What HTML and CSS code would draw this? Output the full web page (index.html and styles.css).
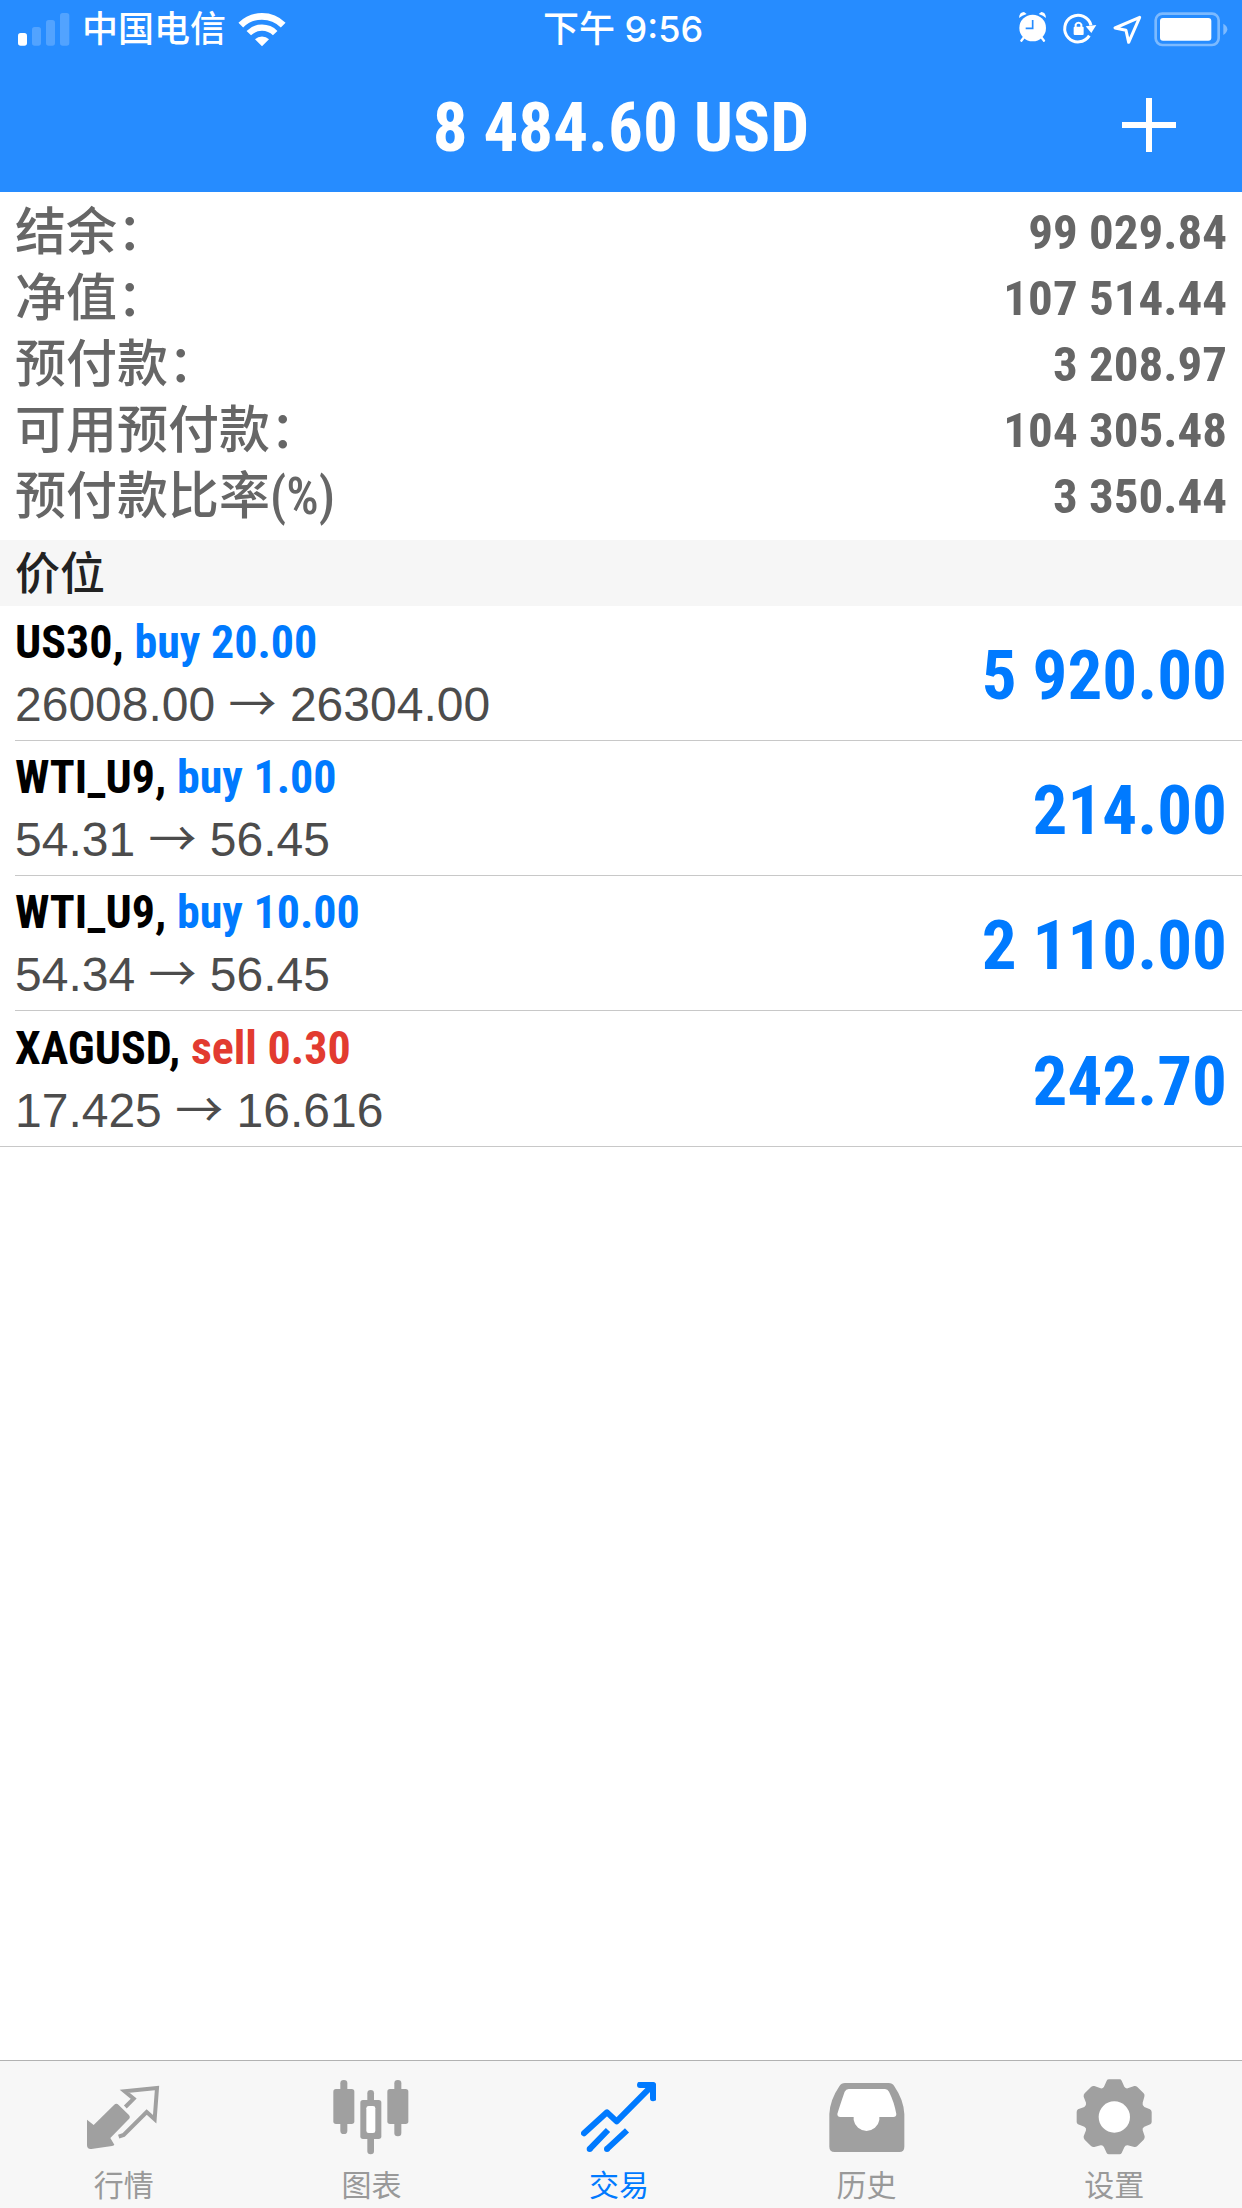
FILE: index.html
```html
<!DOCTYPE html>
<html lang="zh-CN">
<head>
<meta charset="utf-8">
<meta name="viewport" content="width=device-width, initial-scale=1">
<title>交易</title>
<link rel="stylesheet" href="styles.css">
</head>
<body>
<div class="app">
  <div class="top">
    <div class="status">
      <div class="status-left">
        <svg class="signal" viewBox="54 38 156 99" aria-hidden="true">
          <rect x="54" y="98" width="27" height="38" rx="8" fill="#fff"/>
          <g fill="#fff" opacity=".2">
            <rect x="96" y="80" width="27" height="56" rx="8"/>
            <rect x="138" y="59" width="27" height="77" rx="8"/>
            <rect x="180" y="38" width="28" height="98" rx="8"/>
          </g>
        </svg>
        <span class="carrier">中国电信</span>
        <svg class="wifi" viewBox="720 36 144 105" aria-hidden="true">
          <g fill="none" stroke="#fff">
            <path stroke-width="20" d="M728.4 75.4A90 90 0 0 1 855.6 75.4"/>
            <path stroke-width="19" d="M752.4 99.4A56 56 0 0 1 831.6 99.4"/>
          </g>
          <path fill="#fff" d="M792 139L771 118A30 30 0 0 1 813 118Z"/>
        </svg>
      </div>
      <span class="clock">下午 9:56</span>
      <div class="status-right">
        <svg class="status-icon" viewBox="90 27 120 120" aria-hidden="true">
          <circle cx="158" cy="84" r="40" fill="#fff"/>
          <path fill="#fff" d="M117 54Q118 36 132 36L140 42Q126 46 117 54ZM198 54Q197 36 184 36L176 42Q190 46 198 54Z"/>
          <path stroke="#fff" stroke-width="7" stroke-linecap="round" d="M132 112L124 122M184 112L192 122"/>
          <path fill="none" stroke="#268cff" stroke-width="5" d="M158 60V85H137"/>
        </svg>
        <svg class="status-icon" viewBox="234 27 120 120" aria-hidden="true">
          <path fill="none" stroke="#fff" stroke-width="9" d="M328 107A40 40 0 1 1 333 76"/>
          <path fill="#fff" d="M317 79L349 75 334 99Z"/>
          <rect x="281" y="80" width="30" height="25" rx="3" fill="#fff"/>
          <path fill="none" stroke="#fff" stroke-width="6" d="M287 84V74A9 9 0 0 1 304 74V84"/>
        </svg>
        <svg class="status-icon" viewBox="378 27 120 120" aria-hidden="true">
          <path fill="none" stroke="#fff" stroke-width="9" stroke-linejoin="round" d="M479 52L405 84 438 91 446 127Z"/>
        </svg>
        <svg class="battery" viewBox="521 35 222 105" aria-hidden="true">
          <rect x="526" y="40" width="189" height="94" rx="20" fill="none" stroke="#fff" stroke-width="8" opacity=".4"/>
          <rect x="539" y="53" width="154" height="68" rx="9" fill="#fff"/>
          <path fill="#fff" opacity=".4" d="M729 70Q741 77 741 87T729 104Z"/>
        </svg>
      </div>
    </div>
    <header class="header">
      <h1 class="title">8 484.60 USD</h1>
      <button class="add" type="button" aria-label="新建">
        <svg viewBox="0 0 54 54" aria-hidden="true"><path stroke="#fff" stroke-width="6" d="M27 0V54M0 27H54"/></svg>
      </button>
    </header>
  </div>

  <main class="content">
    <dl class="summary">
      <div class="summary-row"><dt>结余：</dt><dd>99 029.84</dd></div>
      <div class="summary-row"><dt>净值：</dt><dd>107 514.44</dd></div>
      <div class="summary-row"><dt>预付款：</dt><dd>3 208.97</dd></div>
      <div class="summary-row"><dt>可用预付款：</dt><dd>104 305.48</dd></div>
      <div class="summary-row"><dt>预付款比率(%)</dt><dd>3 350.44</dd></div>
    </dl>

    <h2 class="section">价位</h2>
    <ul class="positions">
      <li class="position">
        <div>
          <div class="symbol">US30, <span class="buy">buy 20.00</span></div>
          <div class="prices">26008.00 <span class="arrow">→</span> 26304.00</div>
        </div>
        <strong class="profit">5 920.00</strong>
      </li>
      <li class="position">
        <div>
          <div class="symbol">WTI_U9, <span class="buy">buy 1.00</span></div>
          <div class="prices">54.31 <span class="arrow">→</span> 56.45</div>
        </div>
        <strong class="profit">214.00</strong>
      </li>
      <li class="position">
        <div>
          <div class="symbol">WTI_U9, <span class="buy">buy 10.00</span></div>
          <div class="prices">54.34 <span class="arrow">→</span> 56.45</div>
        </div>
        <strong class="profit">2 110.00</strong>
      </li>
      <li class="position">
        <div>
          <div class="symbol">XAGUSD, <span class="sell">sell 0.30</span></div>
          <div class="prices">17.425 <span class="arrow">→</span> 16.616</div>
        </div>
        <strong class="profit">242.70</strong>
      </li>
    </ul>
  </main>

  <nav class="tabs">
    <a class="tab" href="#quotes">
      <svg viewBox="138 87 228 228" aria-hidden="true">
        <path fill="currentColor" d="M141 209L161 225 222 165Q229 158 236 165L266 194Q273 201 266 208L211 264 223 284Q222 287 216 288L154 297Q141 298 141 286Z"/>
        <path fill="none" stroke="currentColor" stroke-width="12" d="M256 171L281 146 254 124 351 114 344 208 320 186 251 255 236 260"/>
      </svg>
      <span>行情</span>
    </a>
    <a class="tab" href="#charts">
      <svg viewBox="884 87 228 228" aria-hidden="true">
        <g fill="currentColor">
          <rect x="906" y="90" width="21" height="162" rx="10"/>
          <rect x="885" y="117" width="63" height="105" rx="8"/>
          <rect x="987" y="120" width="20" height="193" rx="10"/>
          <rect x="966" y="150" width="63" height="117" rx="8"/>
          <rect x="1068" y="90" width="21" height="169" rx="10"/>
          <rect x="1047" y="117" width="63" height="105" rx="8"/>
        </g>
        <rect x="984" y="168" width="27" height="81" rx="7" fill="#fff"/>
      </svg>
      <span>图表</span>
    </a>
    <a class="tab active" href="#trade" aria-current="page">
      <svg viewBox="126 87 228 228" aria-hidden="true">
        <g fill="none" stroke="currentColor" stroke-width="18" stroke-linejoin="round">
          <path stroke-linecap="round" d="M135 250L204 187 233 214 340 106M303 105H342V145"/>
          <path stroke-linecap="butt" d="M153 296L207 240M205 296L264 241"/>
        </g>
        <circle cx="152" cy="297" r="9" fill="currentColor"/>
        <circle cx="204" cy="297" r="9" fill="currentColor"/>
        <path fill="currentColor" d="M296 97H340Q351 97 351 108V152L333 138V114H306Z"/>
      </svg>
      <span>交易</span>
    </a>
    <a class="tab" href="#history">
      <svg viewBox="869 87 228 228" aria-hidden="true">
        <path fill="currentColor" d="M917 99H1048Q1059 99 1065 109Q1093 150 1095 192V290Q1095 306 1080 306H886Q870 306 870 290V192Q872 150 900 109Q906 99 917 99Z"/>
        <path fill="#fff" d="M928 117H1037Q1045 117 1049 125Q1065 157 1071 192Q1071 201 1062 201H1020V210A39 39 0 0 1 943 210V201H903Q894 201 894 192Q900 171 916 125Q920 117 928 117Z"/>
      </svg>
      <span>历史</span>
    </a>
    <a class="tab" href="#settings">
      <svg viewBox="115 89 228 228" aria-hidden="true">
        <path fill="currentColor" d="M214 90H246Q250 90 252 94L260 112Q264 118 270 117L290 110Q295 109 299 113L318 132Q322 136 320 142L315 160Q313 168 320 173L337 180Q342 183 342 188V218Q342 222 338 225L320 232Q313 236 315 243L321 261Q322 267 318 271L299 290Q295 294 290 293L270 288Q263 287 260 294L252 311Q250 315 246 315H214Q209 315 207 311L199 294Q196 287 189 288L170 293Q164 294 160 290L141 271Q137 267 138 261L145 243Q147 236 140 232L121 225Q117 222 117 218V188Q117 183 121 180L140 173Q147 168 145 160L138 142Q137 136 141 132L160 113Q164 109 170 110L189 117Q196 118 199 112L207 94Q209 90 214 90Z"/>
        <circle cx="230" cy="203" r="47" fill="#fff"/>
      </svg>
      <span>设置</span>
    </a>
  </nav>
</div>
</body>
</html>
```

FILE: styles.css
```css
* {
  box-sizing: border-box;
  margin: 0;
  padding: 0;
}

body {
  background: #fff;
  color: #000;
  font-family: "Roboto Condensed", "Noto Sans CJK SC", sans-serif;
}

svg {
  display: block;
}

.app {
  display: flex;
  flex-direction: column;
  min-height: 100vh;
}

.top {
  background: #268cff;
  color: #fff;
}

.status {
  display: grid;
  grid-template-columns: 1fr auto 1fr;
  align-items: center;
  height: 58px;
  padding: 0 14px 0 18px;
  font: 500 36px/40px Inter, "Noto Sans CJK SC", sans-serif;
}

.status-left,
.status-right {
  display: flex;
  align-items: center;
}

.status-left {
  gap: 12px;
}

.status-right {
  justify-content: flex-end;
  gap: 8px;
}

.signal {
  width: 52px;
  height: 33px;
}

.wifi {
  width: 48px;
  height: 35px;
}

.status-icon {
  width: 40px;
  height: 40px;
}

.battery {
  width: 74px;
  height: 35px;
}

.header {
  display: grid;
  grid-template-columns: 1fr auto 1fr;
  align-items: center;
  height: 134px;
  padding: 0 66px;
}

.title {
  grid-column: 2;
  padding-top: 6px;
  font-size: 69px;
  line-height: 80px;
  font-weight: 700;
}

.add {
  justify-self: end;
  width: 54px;
  height: 54px;
  border: 0;
  background: none;
  cursor: pointer;
}

.content {
  flex: 1;
}

.summary {
  padding: 8px 15px 10px;
  color: #666;
}

.summary-row {
  display: flex;
  justify-content: space-between;
  line-height: 66px;
}

.summary dt {
  font-size: 51px;
  font-weight: 500;
}

.summary dd {
  font-size: 49px;
  font-weight: 700;
}

.section {
  padding: 4px 15px 0;
  background: #f6f6f6;
  color: #222;
  font-size: 45px;
  line-height: 62px;
  font-weight: 500;
}

.positions {
  list-style: none;
  border-bottom: 1px solid #c8c8c8;
}

.position {
  display: flex;
  align-items: center;
  justify-content: space-between;
  height: 135px;
  margin-left: 15px;
  padding-right: 15px;
  border-bottom: 1px solid #c8c8c8;
}

.position:last-child {
  border-bottom: 0;
}

.symbol {
  font-size: 46px;
  line-height: 64px;
  font-weight: 700;
}

.buy,
.profit {
  color: #007aff;
}

.sell {
  color: #e23b30;
}

.prices {
  color: #4c4c4c;
  font: 400 48px/62px "Liberation Sans", sans-serif;
}

.arrow {
  font-family: "Noto Sans CJK SC", sans-serif;
  line-height: 1;
}

.profit {
  padding-top: 6px;
  font-size: 69px;
  line-height: 80px;
}

.tabs {
  display: grid;
  grid-template-columns: repeat(5, 1fr);
  height: 148px;
  padding-right: 4px;
  border-top: 1px solid #b2b2b2;
  background: #f7f7f7;
}

.tab {
  display: flex;
  flex-direction: column;
  align-items: center;
  gap: 8px;
  padding-top: 18px;
  color: #999;
  font: 400 30px/40px "Noto Sans CJK SC", sans-serif;
  text-decoration: none;
}

.tab svg {
  width: 76px;
  height: 76px;
  color: #a0a0a0;
}

.active,
.tab.active svg {
  color: #007aff;
}
```
